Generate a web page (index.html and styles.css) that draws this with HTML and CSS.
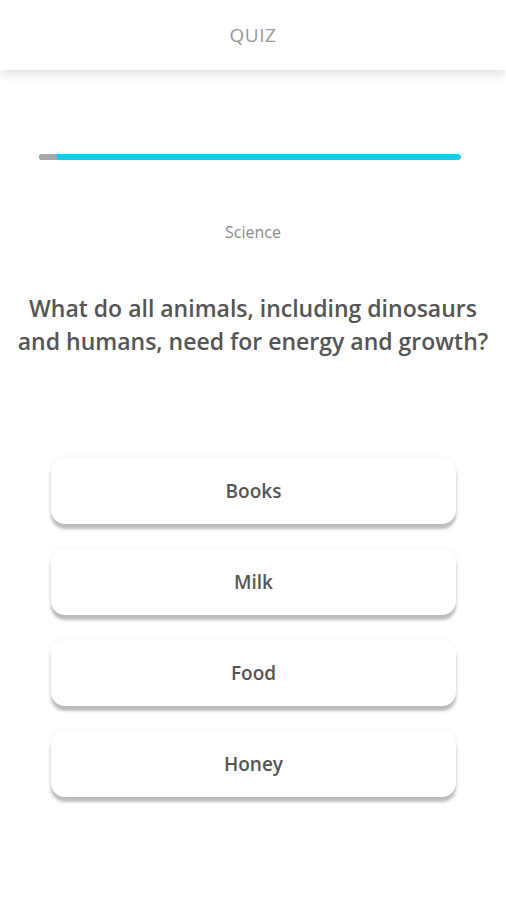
FILE: index.html
```html
<!DOCTYPE html>
<html lang="en">
<head>
    <meta charset="UTF-8">
    <meta name="viewport" content="width=device-width, initial-scale=1.0">
    <title>Quiz</title>
    <link rel="stylesheet" href="styles.css">
</head>
<body>
    <div class="header">
        <p class="title">QUIZ</p>
    </div>

    <div class="container">
        <div class="progress">
            <div class="progress-done"></div>
        </div>

        <p class="category">Science</p>

        <h2 class="question">What do all animals, including dinosaurs and humans, need for energy and growth?</h2>

        <div class="answers">
            <button class="answer">Books</button>
            <button class="answer">Milk</button>
            <button class="answer">Food</button>
            <button class="answer">Honey</button>
        </div>
    </div>
</body>
</html>
```

FILE: styles.css
```css
body {
    font-family: "Open Sans", "Noto Sans", sans-serif;
    background-color: #fff;
    margin: 0;
    padding: 0;
}

.header {
    height: 70px;
    display: flex;
    align-items: center;
    justify-content: center;
    background-color: #fff;
    box-shadow: 0 4px 10px rgba(0, 0, 0, 0.12);
    position: relative;
}

.title {
    margin: 0;
    font-size: 19px;
    color: #9a9a9a;
    letter-spacing: 0.5px;
}

.container {
    padding: 0 12px 40px;
}

.progress {
    margin: 84px 33px 0 27px;
    height: 6px;
    border-radius: 3px;
    background-color: #14cde6;
    overflow: hidden;
}

.progress-done {
    width: 18px;
    height: 100%;
    background-color: #a8a8a8;
}

.category {
    margin: 61px 0 0;
    text-align: center;
    font-size: 16px;
    color: #8a8a8a;
}

.question {
    margin: 49px 0 0;
    text-align: center;
    font-size: 23px;
    line-height: 33px;
    font-weight: 600;
    color: #555;
}

.answers {
    margin: 100px 38px 0 39px;
    display: flex;
    flex-direction: column;
    gap: 25px;
}

.answer {
    height: 66px;
    border: none;
    border-radius: 14px;
    background-color: #fff;
    font-family: inherit;
    font-size: 19px;
    font-weight: 600;
    color: #555;
    box-shadow: 0 5px 3px rgba(0, 0, 0, 0.25), 0 0 6px rgba(0, 0, 0, 0.06);
}
```
